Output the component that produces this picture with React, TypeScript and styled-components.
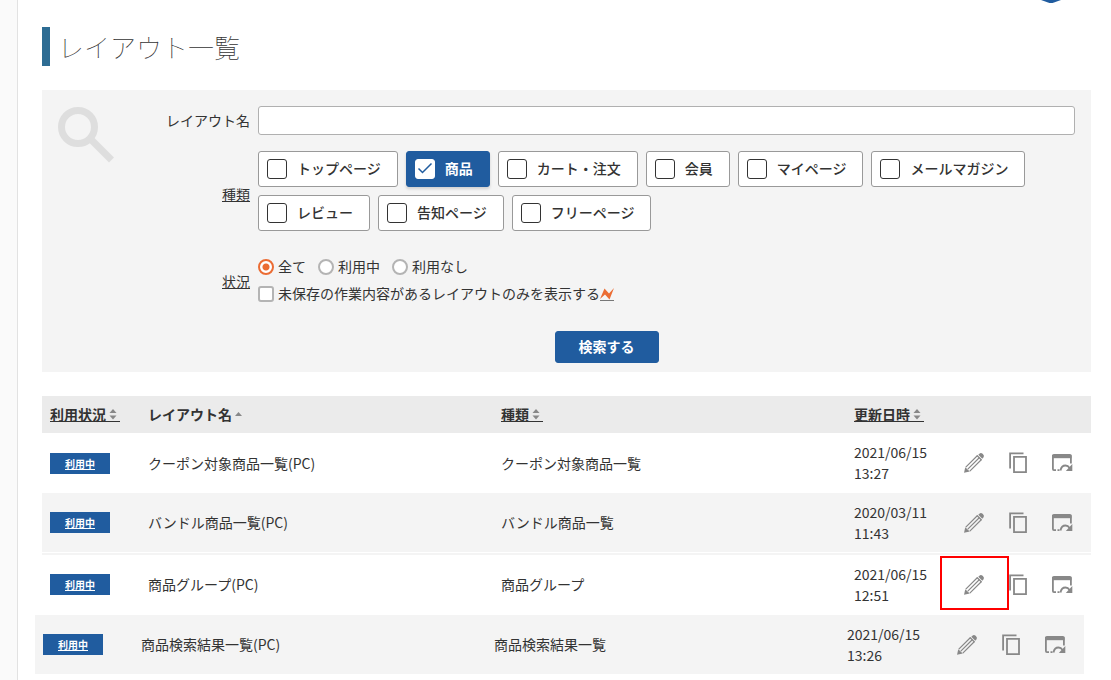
import React from "react";
import styled, { createGlobalStyle } from "styled-components";

const GlobalStyle = createGlobalStyle`
  *, *::before, *::after { box-sizing: border-box; }
  body {
    margin: 0;
    background: #fff;
    color: #333;
    font-family: "Noto Sans CJK JP", "Noto Sans", sans-serif;
    font-size: 14px;
    line-height: 21px;
  }
  button, input { font: inherit; color: inherit; }
`;

const Page = styled.div`
  display: grid;
  grid-template-columns: 18px minmax(0, 1fr);
  min-height: 100vh;
`;

const Rail = styled.aside`
  background: #fafafa;
  border-right: 1px solid #e2e2e2;
`;

const Main = styled.main`
  position: relative;
  padding: 27px 20px 6px 24px;
`;

const CornerMark = styled.svg`
  position: absolute;
  top: 0;
  right: 50px;
`;

const Title = styled.h1`
  margin: 0 0 24px;
  padding-left: 8px;
  border-left: 8px solid #2d6c93;
  font-size: 26px;
  font-weight: 100;
  line-height: 39px;
`;

const SearchPanel = styled.form`
  display: grid;
  grid-template-columns: 80px minmax(0, 1fr);
  padding: 16px 16px 9px;
  margin-bottom: 24px;
  background: #f4f4f4;
`;

const Fields = styled.div`
  display: grid;
  grid-template-columns: 112px minmax(0, 1fr);
  column-gap: 8px;
  row-gap: 16px;
  align-items: center;
`;

const FieldLabel = styled.label`
  text-align: right;
`;

const FieldTerm = styled.span`
  padding-bottom: 2px;
  text-align: right;
  text-decoration: underline;
`;

const TextField = styled.input`
  width: 100%;
  height: 29px;
  padding: 0 8px;
  border: 1px solid #b0b0b0;
  border-radius: 3px;
  background: #fff;
`;

const ChipList = styled.div`
  display: flex;
  flex-wrap: wrap;
  gap: 8px;
  padding-bottom: 8px;
`;

const Chip = styled.label<{ $on: boolean }>`
  display: flex;
  align-items: center;
  gap: 10px;
  height: 36px;
  padding: 0 16px 0 8px;
  border: 1px solid ${(p) => (p.$on ? "#205c9f" : "#999")};
  border-radius: 3px;
  background: ${(p) => (p.$on ? "#205c9f" : "#fff")};
  color: ${(p) => (p.$on ? "#fff" : "#333")};
  box-shadow: ${(p) => (p.$on ? "0 2px 3px rgba(0, 0, 0, 0.15)" : "none")};
  font-weight: ${(p) => (p.$on ? 700 : 500)};
`;

const ChipText = styled.span`
  padding-bottom: 2px;
`;

const tick =
  "url(\"data:image/svg+xml,%3Csvg xmlns='http://www.w3.org/2000/svg' viewBox='0 0 20 20'%3E%3Cpath d='M3.500 9.500l4 4 9-9' fill='none' stroke='%23205c9f' stroke-width='1.500'/%3E%3C/svg%3E\")";

const ChipBox = styled.input`
  appearance: none;
  flex: none;
  width: 20px;
  height: 20px;
  margin: 0;
  border: 1px solid #333;
  border-radius: 3px;
  background: #fff;
  &:checked {
    border-color: #fff;
    background: #fff ${tick} center / 20px 20px no-repeat;
  }
`;

const StatusGroup = styled.div`
  display: flex;
  flex-direction: column;
  gap: 6px;
  padding: 1px 0 5px;
`;

const RadioRow = styled.div`
  display: flex;
  gap: 12px;
`;

const Option = styled.label`
  display: flex;
  align-items: center;
  gap: 4px;
`;

const Radio = styled.input`
  appearance: none;
  width: 16px;
  height: 16px;
  margin: 0;
  border: 2px solid #b4b4b4;
  border-radius: 50%;
  background: #fff;
  &:checked {
    border-color: #eb6c33;
    background: radial-gradient(circle, #eb6c33 0 3px, #fff 4px);
  }
`;

const CheckBox = styled.input`
  appearance: none;
  width: 16px;
  height: 16px;
  margin: 0;
  border: 2px solid #b4b4b4;
  border-radius: 3px;
  background: #fff;
`;

const OptionText = styled.span`
  display: flex;
  align-items: center;
`;

const SubmitButton = styled.button`
  grid-column: 1 / -1;
  justify-self: center;
  height: 32px;
  margin-top: 6px;
  padding: 0 23px 2px;
  border: 1px solid #205c9f;
  border-radius: 3px;
  background: #205c9f;
  color: #fff;
  font-weight: 700;
`;

const Table = styled.table<{ $shift?: boolean }>`
  width: 100%;
  table-layout: fixed;
  border-spacing: 0;
  margin-left: ${(p) => (p.$shift ? "-7px" : "0")};
`;

const HeadCell = styled.th`
  height: 37px;
  padding: 0 8px;
  background: #ebebeb;
  text-align: left;
`;

const SortButton = styled.button<{ $active?: boolean }>`
  display: flex;
  align-items: center;
  padding: 0;
  border: 0;
  border-bottom: 1px solid ${(p) => (p.$active ? "transparent" : "#333")};
  background: none;
  font-weight: 700;
  line-height: 14px;
`;

const Row = styled.tr<{ $shaded?: boolean; $ruled?: boolean }>`
  > td {
    height: ${(p) => (p.$ruled ? "62px" : "60px")};
    padding: 0 8px;
    background: ${(p) => (p.$shaded ? "#f4f4f4" : "#fff")};
    border-top: ${(p) => (p.$ruled ? "2px solid #f4f4f4" : "0")};
    border-bottom: ${(p) => (p.$shaded || p.$ruled ? "1px solid #fff" : "0")};
  }
  > td.actions {
    padding: 0 7px 0 0;
  }
`;

const Badge = styled.a`
  display: block;
  width: 60px;
  height: 21px;
  background: #205c9f;
  color: #fff;
  font-size: 10px;
  font-weight: 700;
  text-align: center;
  text-decoration: underline;
`;

const Actions = styled.div`
  display: grid;
  grid-template-columns: repeat(3, 44px);
`;

const ActionButton = styled.button`
  position: relative;
  display: flex;
  align-items: center;
  justify-content: center;
  height: 44px;
  padding: 0;
  border: 0;
  background: none;
  color: #888;
`;

const Highlight = styled.span`
  position: absolute;
  top: -7px;
  left: -12px;
  width: 69px;
  height: 54px;
  border: 2px solid #f00;
`;

const SearchIcon = () => (
  <svg width="57" height="57" viewBox="0 0 57 57" fill="none" stroke="#dedede" strokeWidth="7" aria-hidden="true">
    <circle cx="20" cy="21" r="16.500" />
    <path d="M32 32.500l21.500 21.500" />
  </svg>
);

const SortIcon = ({ single }: { single?: boolean }) => (
  <svg width="14" height="14" viewBox="0 0 14 14" fill="#888" aria-hidden="true">
    {single ? <path d="M3 9l3.500-4 3.500 4z" /> : <path d="M3.500 6L7 2l3.500 4zM3.500 8.500h7L7 12.500z" />}
  </svg>
);

const UnsavedIcon = () => (
  <svg width="14" height="14" viewBox="0 0 14 14" aria-hidden="true">
    <path d="M0 12L4.500 1.500 9 6.500 14 1 9.500 12.500 5 7.500z" fill="#eb6c33" />
    <path d="M0 13.500h14" stroke="#777" />
  </svg>
);

const PencilIcon = () => (
  <svg width="22" height="22" viewBox="0 0 22 22" fill="none" stroke="currentColor" strokeWidth="1.200" aria-hidden="true">
    <path d="M2.800 15.200L14.500 3.500M6.800 19.200L18.500 7.500M4.800 17.200L16.500 5.500" />
    <path d="M1 20.700l1.300-5.500 4.500 4.300z" fill="currentColor" stroke="none" />
    <path d="M15.300 2.700l1.400-1.300q1.400-1 3.200.7t.7 3.200l-1.300 1.400z" fill="currentColor" stroke="none" />
    <path d="M14 3.500l4.500 4.500" />
  </svg>
);

const CopyIcon = () => (
  <svg width="22" height="22" viewBox="0 0 22 22" fill="none" stroke="currentColor" strokeWidth="1.800" aria-hidden="true">
    <path d="M7 4.900h12v15.200H7zM3.100 16.500V1.400h13.400" />
  </svg>
);

const RestoreIcon = () => (
  <svg width="22" height="22" viewBox="0 0 22 22" fill="none" stroke="currentColor" strokeWidth="1.800" aria-hidden="true">
    <path d="M5 18.100H2.900q-1 0-1-1V3.900q0-1 1-1h16q1 0 1 1v7.600M6.500 18.100h2" />
    <path d="M1 3h19.500v3.200H1z" fill="currentColor" stroke="none" />
    <path d="M9.500 18.500q.8-5 5-5 2.500 0 4.300 2.700" />
    <path d="M21.300 12v7.100h-6.500z" fill="currentColor" stroke="none" />
  </svg>
);

const kinds = [
  "トップページ", "商品", "カート・注文", "会員", "マイページ",
  "メールマガジン", "レビュー", "告知ページ", "フリーページ",
];
const statuses = ["全て", "利用中", "利用なし"];

type Layout = { kind: string; date: string; shaded?: boolean; ruled?: boolean; marked?: boolean };

const layouts: Layout[] = [
  { kind: "クーポン対象商品一覧", date: "2021/06/15 13:27" },
  { kind: "バンドル商品一覧", date: "2020/03/11 11:43", shaded: true },
  { kind: "商品グループ", date: "2021/06/15 12:51", ruled: true, marked: true },
];
const lastLayout: Layout = { kind: "商品検索結果一覧", date: "2021/06/15 13:26", shaded: true };

const StatusCol = styled.col`
  width: 98px;
`;
const DateCol = styled.col`
  width: 106px;
`;
const ActionsCol = styled.col`
  width: 139px;
`;

const Columns = () => (
  <colgroup>
    <StatusCol />
    <col />
    <col />
    <DateCol />
    <ActionsCol />
  </colgroup>
);

const LayoutRow = ({ item }: { item: Layout }) => (
  <Row $shaded={item.shaded} $ruled={item.ruled}>
    <td><Badge href="#">利用中</Badge></td>
    <td>{item.kind}(PC)</td>
    <td>{item.kind}</td>
    <td>{item.date}</td>
    <td className="actions">
      <Actions>
        <ActionButton type="button" aria-label="編集">
          <PencilIcon />
          {item.marked && <Highlight />}
        </ActionButton>
        <ActionButton type="button" aria-label="複製"><CopyIcon /></ActionButton>
        <ActionButton type="button" aria-label="プレビュー"><RestoreIcon /></ActionButton>
      </Actions>
    </td>
  </Row>
);

export default function App() {
  const [selected, setSelected] = React.useState<string[]>(["商品"]);
  const toggle = (kind: string) =>
    setSelected((s) => (s.includes(kind) ? s.filter((k) => k !== kind) : [...s, kind]));

  return (
    <>
      <GlobalStyle />
      <Page>
        <Rail />
        <Main>
          <CornerMark width="20" height="3" viewBox="0 0 20 3" aria-hidden="true">
            <path d="M0 0h20l-7 2.500q-3 1-6 0z" fill="#205c9f" />
          </CornerMark>
          <Title>レイアウト一覧</Title>
          <SearchPanel onSubmit={(e) => e.preventDefault()}>
            <SearchIcon />
            <Fields>
              <FieldLabel htmlFor="layout-name">レイアウト名</FieldLabel>
              <TextField id="layout-name" type="text" />
              <FieldTerm id="kind-label">種類</FieldTerm>
              <ChipList role="group" aria-labelledby="kind-label">
                {kinds.map((kind) => (
                  <Chip key={kind} $on={selected.includes(kind)}>
                    <ChipBox type="checkbox" checked={selected.includes(kind)} onChange={() => toggle(kind)} />
                    <ChipText>{kind}</ChipText>
                  </Chip>
                ))}
              </ChipList>
              <FieldTerm id="status-label">状況</FieldTerm>
              <StatusGroup role="group" aria-labelledby="status-label">
                <RadioRow>
                  {statuses.map((status, i) => (
                    <Option key={status}>
                      <Radio type="radio" name="status" defaultChecked={i === 0} />
                      {status}
                    </Option>
                  ))}
                </RadioRow>
                <Option>
                  <CheckBox type="checkbox" />
                  <OptionText>未保存の作業内容があるレイアウトのみを表示する<UnsavedIcon /></OptionText>
                </Option>
              </StatusGroup>
              <SubmitButton type="submit">検索する</SubmitButton>
            </Fields>
          </SearchPanel>
          <Table>
            <Columns />
            <thead>
              <tr>
                <HeadCell><SortButton type="button">利用状況<SortIcon /></SortButton></HeadCell>
                <HeadCell><SortButton type="button" $active>レイアウト名<SortIcon single /></SortButton></HeadCell>
                <HeadCell><SortButton type="button">種類<SortIcon /></SortButton></HeadCell>
                <HeadCell><SortButton type="button">更新日時<SortIcon /></SortButton></HeadCell>
                <HeadCell as="td" />
              </tr>
            </thead>
            <tbody>
              {layouts.map((item) => <LayoutRow key={item.kind} item={item} />)}
            </tbody>
          </Table>
          <Table $shift>
            <Columns />
            <tbody><LayoutRow item={lastLayout} /></tbody>
          </Table>
        </Main>
      </Page>
    </>
  );
}
